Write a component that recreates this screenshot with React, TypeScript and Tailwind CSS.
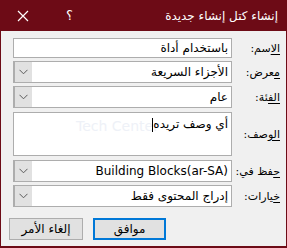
import React from "react";

const font = { fontFamily: '"DejaVu Sans", "Noto Sans", sans-serif' };

function Chevron() {
  return (
    <svg width="9" height="6" viewBox="0 0 9 6" fill="none">
      <path d="M0.5 0.8 L4.5 4.8 L8.5 0.8" stroke="#5a5a5a" strokeWidth="1" />
    </svg>
  );
}

function Label({ first, rest }: { first: string; rest: string }) {
  return (
    <div className="w-[54px] shrink-0 whitespace-nowrap pr-[6px] text-[11px] text-black leading-none">
      <span className="underline underline-offset-2">{first}</span>
      {rest}
    </div>
  );
}

function Combo({ value, ltr = false }: { value: string; ltr?: boolean }) {
  return (
    <div className="flex h-[22px] w-[219px] flex-row-reverse border border-[#adadad] bg-white">
      <div className="flex w-[18px] shrink-0 items-center justify-center border-l border-[#adadad] bg-[#e1e1e1]">
        <Chevron />
      </div>
      <div
        className="flex flex-1 items-center whitespace-nowrap px-[3px] text-[12px] text-black"
        dir={ltr ? "ltr" : "rtl"}
        style={ltr ? { justifyContent: "flex-end" } : undefined}
      >
        {value}
      </div>
    </div>
  );
}

export default function App() {
  return (
    <div dir="rtl" className="h-[248px] w-[287px] overflow-hidden bg-[#6d0b16]" style={font}>
      <div className="flex h-[31px] items-center pr-[9px] text-[12px] text-white">
        <div className="flex-1 whitespace-nowrap">إنشاء كتل إنشاء جديدة</div>
        <div className="ml-[37px] text-[13px]">؟</div>
        <div className="ml-[17px] flex items-center">
          <svg width="12" height="12" viewBox="0 0 12 12">
            <path d="M1 1 L11 11 M11 1 L1 11" stroke="#ffffff" strokeWidth="1.2" />
          </svg>
        </div>
      </div>
      <div className="mx-[1px] flex h-[215px] flex-col bg-[#f0f0f0] pt-[7px]">
        <div className="flex h-[20px] items-center">
          <Label first="الا" rest="سم:" />
          <div className="flex h-[20px] w-[219px] items-center border border-[#adadad] bg-white px-[3px] text-[12px] text-black">
            باستخدام أداة
          </div>
        </div>
        <div className="mt-[3px] flex items-center">
          <Label first="م" rest="عرض:" />
          <Combo value="الأجزاء السريعة" />
        </div>
        <div className="mt-[3px] flex items-center">
          <Label first="الف" rest="ئة:" />
          <Combo value="عام" />
        </div>
        <div className="mt-[4px] flex items-center">
          <Label first="الو" rest="صف:" />
          <div className="relative h-[44px] w-[219px] overflow-hidden border border-[#adadad] bg-white px-[3px] pt-[2px] text-[12px] text-black">
            <div
              dir="ltr"
              className="pointer-events-none absolute left-[62px] top-[3px] whitespace-nowrap text-[14px] text-[#eef1f7]"
            >
              Tech Center
            </div>
            <div className="relative">
              <span>أي وصف تريده</span>
              <span className="inline-block h-[14px] w-[1px] bg-black align-middle"></span>
            </div>
          </div>
        </div>
        <div className="mt-[4px] flex items-center">
          <Label first="ح" rest="فظ في:" />
          <Combo value="Building Blocks(ar-SA)" ltr />
        </div>
        <div className="mt-[3px] flex items-center">
          <Label first="خ" rest="يارات:" />
          <Combo value="إدراج المحتوى فقط" />
        </div>
        <div className="mt-[11px] flex flex-row-reverse pl-[8px]">
          <div className="flex h-[22px] w-[74px] items-center justify-center border border-[#adadad] bg-[#e1e1e1] text-[12px] text-black">
            إلغاء الأمر
          </div>
          <div className="ml-[10px] flex h-[22px] w-[73px] items-center justify-center border-2 border-[#0078d7] bg-[#e1e1e1] text-[12px] text-black">
            موافق
          </div>
        </div>
      </div>
    </div>
  );
}
